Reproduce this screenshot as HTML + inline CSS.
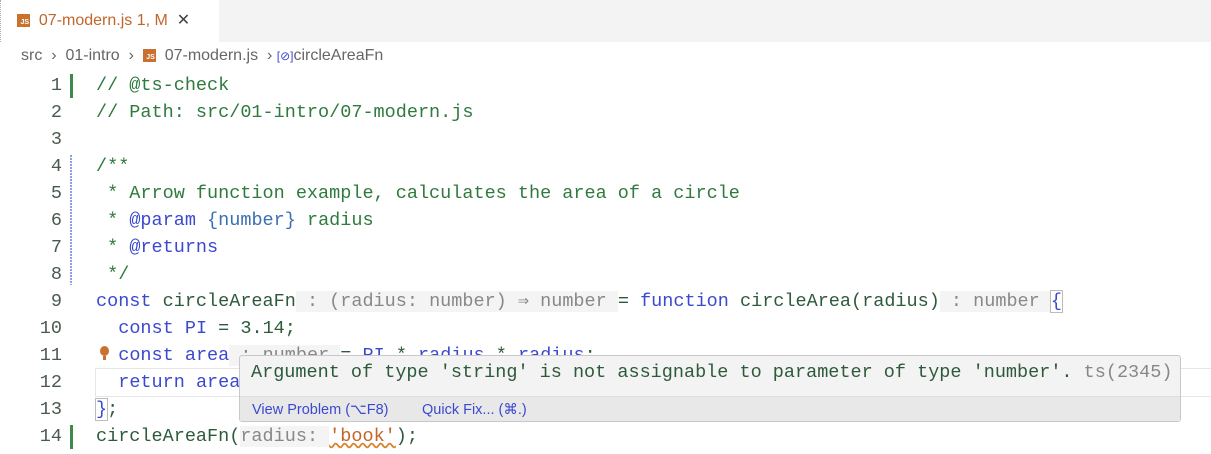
<!DOCTYPE html>
<html><head><meta charset="utf-8"><style>
body{margin:0;width:1211px;height:454px;background:#fff;position:relative;overflow:hidden;font-family:"Liberation Sans",sans-serif}
.tabbar{position:absolute;left:0;top:0;width:1211px;height:42px;background:#f3f3f3}
.tab{position:absolute;left:0;top:0;width:218px;height:42px;background:#fff;border-left:1px dotted #aaa}
.js{display:inline-block;width:13px;height:13px;background:#c9712e;color:#fff;font-size:7px;font-weight:bold;line-height:18px;text-align:right;box-sizing:border-box;padding-right:1px;vertical-align:middle}
.tab .t{position:absolute;left:16px;top:10px;font-size:16px;color:#c0662a}
.bc{position:absolute;left:21px;top:47px;font-size:16px;color:#666}
.code{position:absolute;left:0;top:72px;font-family:"Liberation Mono",monospace;font-size:18.5px}
.ln{position:absolute;left:0;width:62px;text-align:right;color:#4a5a4f;height:27px;line-height:27px}
.l{position:absolute;left:96px;height:27px;line-height:27px;white-space:pre;color:#2d5a3a}
.c{color:#2f7a3d}.k{color:#3b49d0}.h{color:#888;background:#f4f4f4}.s{color:#c0662a}.tg{color:#3b49d0}
.bar{position:absolute;left:70px;width:3px;background:#3f8a4a}
.hov{position:absolute;left:239px;top:355px;width:942px;height:67px;border:1px solid #c8c8c8;border-radius:3px;background:#f3f3f3;box-sizing:border-box}
.hov .m{position:absolute;left:11px;top:6px;font-family:"Liberation Mono",monospace;font-size:18.5px;color:#2d5a3a;white-space:pre}
.hov .f{position:absolute;left:0;right:0;top:40px;bottom:0;background:#e8e8e8;border-top:1px solid #ddd}
.hov .f span{position:absolute;top:5px;font-size:14.5px;color:#3b49d0}
</style></head><body>
<div class="tabbar"><div class="tab"><span class="t"><span class="js">JS</span>&nbsp; 07-modern.js 1, M &nbsp;<span style="color:#444">✕</span></span></div></div>
<div class="bc">src &nbsp;›&nbsp; 01-intro &nbsp;›&nbsp; <span class="js">JS</span>&nbsp; 07-modern.js &nbsp;›&nbsp;<span style="color:#3b49d0;font-size:12px">[⊘]</span>circleAreaFn</div>
<div class="code">
<div class="bar" style="top:2px;height:24px"></div>
<div class="bar" style="top:83px;height:130px;background:repeating-linear-gradient(#8aa0e8 0 2px,#fff 2px 3px);width:2px"></div>
<div class="bar" style="top:353px;height:24px"></div>
<div class="ln" style="top:0">1</div><div class="l c" style="top:0">// @ts-check</div>
<div class="ln" style="top:27px">2</div><div class="l c" style="top:27px">// Path: src/01-intro/07-modern.js</div>
<div class="ln" style="top:54px">3</div>
<div class="ln" style="top:81px">4</div><div class="l c" style="top:81px">/**</div>
<div class="ln" style="top:108px">5</div><div class="l c" style="top:108px"> * Arrow function example, calculates the area of a circle</div>
<div class="ln" style="top:135px">6</div><div class="l c" style="top:135px"> * <span class="tg">@param</span> <span style="color:#3b6fb0">{number}</span> radius</div>
<div class="ln" style="top:162px">7</div><div class="l c" style="top:162px"> * <span class="tg">@returns</span></div>
<div class="ln" style="top:189px">8</div><div class="l c" style="top:189px"> */</div>
<div class="ln" style="top:216px">9</div><div class="l" style="top:216px"><span class="k">const</span> circleAreaFn<span class="h"> : (radius: number) ⇒ number </span>= <span class="k">function</span> circleArea(radius)<span class="h"> : number </span><span class="k" style="outline:1px solid #bbb">{</span></div>
<div class="ln" style="top:243px">10</div><div class="l" style="top:243px">  <span class="k">const</span> <span class="k">PI</span> = 3.14;</div>
<div class="ln" style="top:270px">11</div><div class="l" style="top:270px">  <span class="k">const</span> <span class="k">area</span><span class="h"> : number </span>= <span class="k">PI</span> * <span class="k">radius</span> * <span class="k">radius</span>;</div>
<div style="position:absolute;left:100px;top:274px;width:9px;height:10px;border-radius:50%;background:#c9712e"></div>
<div style="position:absolute;left:103px;top:284px;width:3px;height:4px;background:#c9712e"></div>
<div class="ln" style="top:297px">12</div><div class="l" style="top:297px;width:1115px;outline:1px solid #e6e6e6">  <span class="k">return</span> <span class="k">area</span>;</div>
<div class="ln" style="top:324px">13</div><div class="l" style="top:324px"><span class="k" style="outline:1px solid #bbb">}</span>;</div>
<div class="ln" style="top:351px">14</div><div class="l" style="top:351px">circleAreaFn(<span class="h">radius: </span><span class="s" style="text-decoration:underline wavy #d9822b">'book'</span>);</div>
</div>
<div class="hov"><div class="m">Argument of type 'string' is not assignable to parameter of type 'number'. <span style="color:#888">ts(2345)</span></div>
<div class="f"><span style="left:12px">View Problem (⌥F8)</span><span style="left:182px">Quick Fix... (⌘.)</span></div></div>
</body></html>
